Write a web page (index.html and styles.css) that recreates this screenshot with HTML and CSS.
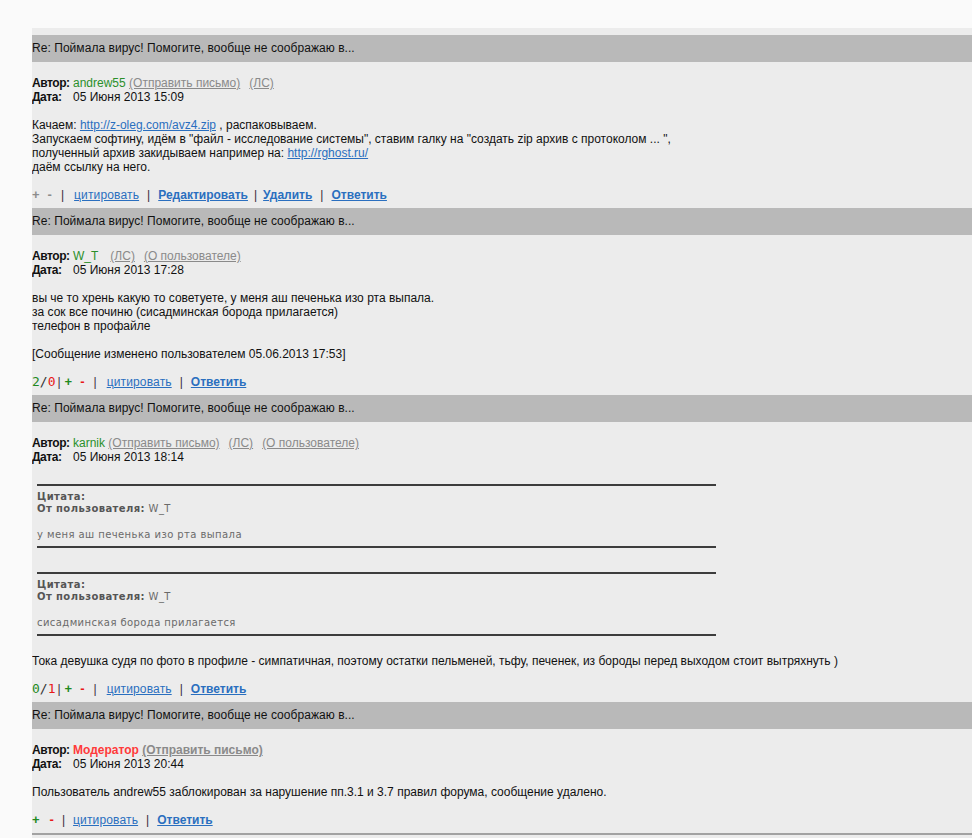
FILE: index.html
```html
<!DOCTYPE html>
<html lang="ru">
<head>
<meta charset="utf-8">
<title>Re: Поймала вирус!</title>
<link rel="stylesheet" href="styles.css">
</head>
<body>
<div class="page">

  <div class="post">
    <div class="title">Re: Поймала вирус! Помогите, вообще не соображаю в...</div>
    <div class="meta">
      <div><span class="lbl">Автор:</span><span class="user">andrew55</span> <a class="glink" href="#">(Отправить письмо)</a><a class="glink gap" href="#">(ЛС)</a></div>
      <div><span class="lbl">Дата:</span>05 Июня 2013 15:09</div>
    </div>
    <div class="body">Качаем: <a class="blink" href="#">http://z-oleg.com/avz4.zip</a> , распаковываем.<br>Запускаем софтину, идём в "файл - исследование системы", ставим галку на "создать zip архив с протоколом ... ",<br>полученный архив закидываем например на: <a class="blink" href="#">http://rghost.ru/</a><br>даём ссылку на него.</div>
    <div class="actions">
      <span class="vote off">+</span><span class="vote off v2">-</span><span class="pipe first">|</span><a class="act" href="#">цитировать</a><span class="pipe">|</span><a class="act b" href="#">Редактировать</a><span class="pipe n">|</span><a class="act b" href="#">Удалить</a><span class="pipe">|</span><a class="act b" href="#">Ответить</a>
    </div>
  </div>

  <div class="post">
    <div class="title">Re: Поймала вирус! Помогите, вообще не соображаю в...</div>
    <div class="meta">
      <div><span class="lbl">Автор:</span><span class="user">W_T</span><a class="glink gap2" href="#">(ЛС)</a><a class="glink gap" href="#">(О пользователе)</a></div>
      <div><span class="lbl">Дата:</span>05 Июня 2013 17:28</div>
    </div>
    <div class="body">вы че то хрень какую то советуете, у меня аш печенька изо рта выпала.<br>за сок все починю (сисадминская борода прилагается)<br>телефон в профайле<br><br>[Сообщение изменено пользователем 05.06.2013 17:53]</div>
    <div class="actions">
      <span class="rating"><span class="pos">2</span>/<span class="neg">0</span></span><span class="pipe tight">|</span><span class="vote plus">+</span><span class="vote minus v2">-</span><span class="pipe first">|</span><a class="act" href="#">цитировать</a><span class="pipe">|</span><a class="act b" href="#">Ответить</a>
    </div>
  </div>

  <div class="post">
    <div class="title">Re: Поймала вирус! Помогите, вообще не соображаю в...</div>
    <div class="meta">
      <div><span class="lbl">Автор:</span><span class="user">karnik</span> <a class="glink" href="#">(Отправить письмо)</a><a class="glink gap" href="#">(ЛС)</a><a class="glink gap" href="#">(О пользователе)</a></div>
      <div><span class="lbl">Дата:</span>05 Июня 2013 18:14</div>
    </div>
    <div class="quotes">
      <div class="quote">
        <div class="qhead">Цитата:</div>
        <div><span class="qhead">От пользователя:</span> W_T</div>
        <div class="qtext">у меня аш печенька изо рта выпала</div>
      </div>
      <div class="quote">
        <div class="qhead">Цитата:</div>
        <div><span class="qhead">От пользователя:</span> W_T</div>
        <div class="qtext">сисадминская борода прилагается</div>
      </div>
    </div>
    <div class="body after-quote">Тока девушка судя по фото в профиле - симпатичная, поэтому остатки пельменей, тьфу, печенек, из бороды перед выходом стоит вытряхнуть )</div>
    <div class="actions">
      <span class="rating"><span class="pos">0</span>/<span class="neg">1</span></span><span class="pipe tight">|</span><span class="vote plus">+</span><span class="vote minus v2">-</span><span class="pipe first">|</span><a class="act" href="#">цитировать</a><span class="pipe">|</span><a class="act b" href="#">Ответить</a>
    </div>
  </div>

  <div class="post">
    <div class="title">Re: Поймала вирус! Помогите, вообще не соображаю в...</div>
    <div class="meta">
      <div><span class="lbl">Автор:</span><span class="mod">Модератор</span> <a class="glink b" href="#">(Отправить письмо)</a></div>
      <div><span class="lbl">Дата:</span>05 Июня 2013 20:44</div>
    </div>
    <div class="body">Пользователь andrew55 заблокирован за нарушение пп.3.1 и 3.7 правил форума, сообщение удалено.</div>
    <div class="actions">
      <span class="vote plus">+</span><span class="vote minus v3">-</span><span class="pipe">|</span><a class="act" href="#">цитировать</a><span class="pipe">|</span><a class="act b" href="#">Ответить</a>
    </div>
  </div>

  <div class="endline"></div>
</div>
</body>
</html>
```

FILE: styles.css
```css
html, body {
  margin: 0;
  padding: 0;
  background: #fafafa;
}
body {
  font-family: "Liberation Sans", Arial, sans-serif;
  font-size: 12px;
  line-height: 14px;
  color: #111;
}
.page {
  margin-top: 28px;
  margin-left: 32px;
  background: #ececec;
  padding-top: 7px;
  height: 810px;
  overflow: hidden;
}
.title {
  height: 27px;
  line-height: 27px;
  background: #b9b9b9;
  color: #111;
  letter-spacing: 0.05px;
}
.meta {
  padding-top: 14px;
}
.lbl {
  display: inline-block;
  width: 40px;
  margin-right: 1px;
  font-weight: bold;
  letter-spacing: -0.45px;
}
.user {
  color: #2a8f2a;
}
.mod {
  color: #ff3a3a;
  font-weight: bold;
}
.glink {
  color: #8a8a8a;
  text-decoration: underline;
}
.glink.b {
  font-weight: bold;
}
.gap {
  margin-left: 9px;
}
.gap2 {
  margin-left: 12px;
}
.body {
  margin-top: 14px;
}
.body.after-quote {
  margin-top: 18px;
}
.blink {
  color: #2a6fbf;
  text-decoration: underline;
}
.actions {
  margin-top: 14px;
  height: 14px;
  padding-bottom: 6px;
  white-space: nowrap;
}
.vote {
  font-weight: bold;
  font-size: 13px;
}
.vote.off {
  color: #8c8c8c;
}
.vote.plus {
  color: #1f8a1f;
}
.vote.minus {
  color: #e81818;
}
.v2 {
  margin-left: 8px;
}
.v3 {
  margin-left: 10px;
}
.pipe {
  color: #3a2a3a;
  margin: 0 8px 0 8px;
}
.pipe.first {
  margin: 0 10px 0 9px;
}
.pipe.n {
  margin: 0 6px 0 6px;
}
.pipe.tight {
  margin: 0 4px 0 2px;
}
.act {
  color: #2a6fbf;
  text-decoration: underline;
  letter-spacing: 0.15px;
}
.act.b {
  font-weight: bold;
  letter-spacing: 0;
}
.rating {
  font-family: "DejaVu Sans Mono", monospace;
  font-size: 13px;
  color: #333;
}
.rating .pos {
  color: #1f8a1f;
}
.rating .neg {
  color: #e81818;
}
.quotes {
  margin-top: 20px;
  display: flex;
  flex-direction: column;
  gap: 24px;
}
.quote {
  width: 679px;
  margin-left: 5px;
  border-top: 2px solid #3c3c3c;
  border-bottom: 2px solid #3c3c3c;
  padding: 5px 0;
  font-family: "DejaVu Sans", Verdana, sans-serif;
  font-size: 10px;
  line-height: 12px;
  letter-spacing: 0.42px;
  color: #6a6a6a;
}
.qhead {
  font-weight: bold;
  color: #555;
}
.qtext {
  margin-top: 14px;
}
.endline {
  border-top: 2px solid #a2a2a2;
}
```
